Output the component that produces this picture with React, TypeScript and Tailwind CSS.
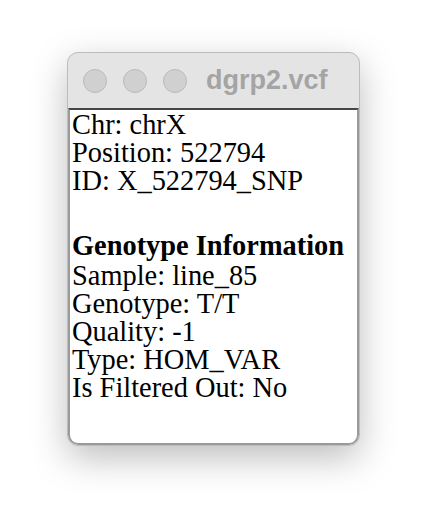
import React from "react";

export default function App() {
  const serif = { fontFamily: '"Liberation Serif", "Times New Roman", serif' } as React.CSSProperties;
  return (
    <div className="w-[428px] h-[530px] bg-white flex items-start">
      <div className="ml-[67px] mt-[52px] w-[293px] h-[394px] rounded-[11px] border border-[#bcbcbc] bg-[#e4e4e4] overflow-hidden flex flex-col shadow-[0_12px_36px_rgba(0,0,0,0.26)]">
        <div className="h-[55px] shrink-0 flex items-center pl-[15px]">
          <div className="flex items-center gap-[16px]">
            <span className="block w-[24px] h-[24px] rounded-full bg-[#d0d0d0] border border-[#bababa]" />
            <span className="block w-[24px] h-[24px] rounded-full bg-[#d0d0d0] border border-[#bababa]" />
            <span className="block w-[24px] h-[24px] rounded-full bg-[#d0d0d0] border border-[#bababa]" />
          </div>
          <span
            className="ml-[19px] text-[27px] font-bold text-[#a4a4a4] leading-none"
            style={{ fontFamily: '"Liberation Sans", Arial, sans-serif' }}
          >
            dgrp2.vcf
          </span>
        </div>
        <div
          className="flex-1 bg-white border-t-2 border-t-[#454545] border-x-2 border-x-[#9a9a9a] border-b-2 border-b-[#9a9a9a] rounded-b-[10px] pl-[2px] pt-[1px] text-black text-[28.4px] leading-[27.8px]"
          style={serif}
        >
          <div>Chr: chrX</div>
          <div>Position: 522794</div>
          <div>ID: X_522794_SNP</div>
          <div className="mt-[37px] font-bold leading-[30px]">Genotype Information</div>
          <div className="mt-[1px]">Sample: line_85</div>
          <div>Genotype: T/T</div>
          <div>Quality: -1</div>
          <div>Type: HOM_VAR</div>
          <div>Is Filtered Out: No</div>
        </div>
      </div>
    </div>
  );
}
